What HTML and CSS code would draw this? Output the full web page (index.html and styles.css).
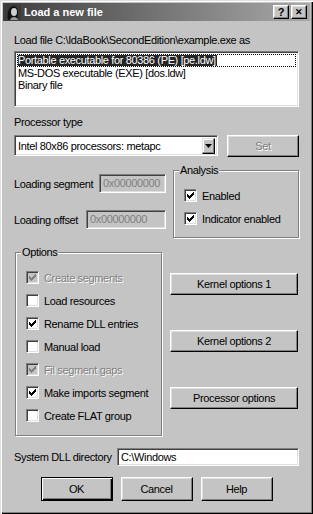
FILE: index.html
```html
<!DOCTYPE html>
<html lang="en">
<head>
  <meta charset="UTF-8" />
  <meta name="viewport" content="width=device-width, initial-scale=1.0"/>
  <title>Load a new file</title>
  <link rel="stylesheet" href="styles.css">
</head>
<body>
  <div class="window">
    <div class="titlebar">
      <svg class="app-icon" width="16" height="16" viewBox="0 0 16 16">
        <rect width="16" height="16" fill="#3a3a3a"/>
        <path d="M3 16 C2 10 3 3 8 2 C13 2 14 8 12 16 Z" fill="#111"/>
        <ellipse cx="9" cy="8" rx="3" ry="4" fill="#cfcfcf"/>
        <path d="M5 16 C6 12 12 12 13 16 Z" fill="#9a9a9a"/>
      </svg>
      <span class="title">Load a new file</span>
      <button class="tbtn">?</button>
      <button class="tbtn tbtn-close">&#x2715;</button>
    </div>

    <div class="content">
      <p class="label first">Load file C:\IdaBook\SecondEdition\example.exe as</p>
      <div class="listbox">
        <div class="item selected"><span>Portable executable for 80386 (PE) [pe.ldw]</span></div>
        <div class="item">MS-DOS executable (EXE) [dos.ldw]</div>
        <div class="item">Binary file</div>
      </div>

      <p class="label ptype">Processor type</p>
      <div class="combo-row">
        <div class="combo">
          <span class="combo-text">Intel 80x86 processors: metapc</span>
          <span class="combo-arrow">
            <svg width="7" height="4" viewBox="0 0 7 4"><path d="M0 0h7l-3.5 4z" fill="#000"/></svg>
          </span>
        </div>
        <button class="btn btn-set" disabled>Set</button>
      </div>

      <div class="mid">
        <div class="seg-col">
          <div class="field-row seg">
            <span>Loading segment</span>
            <span class="input disabled w-seg">0x00000000</span>
          </div>
          <div class="field-row off">
            <span>Loading offset</span>
            <span class="input disabled w-off">0x00000000</span>
          </div>
        </div>
        <fieldset class="group analysis">
          <legend>Analysis</legend>
          <label class="check"><span class="cb on"><svg width="11" height="11" viewBox="0 0 11 11"><path d="M2 4h1v3h-1zM3 5h1v3h-1zM4 6h1v3h-1zM5 5h1v3h-1zM6 4h1v3h-1zM7 3h1v3h-1zM8 2h1v3h-1z"/></svg></span>Enabled</label>
          <label class="check"><span class="cb on"><svg width="11" height="11" viewBox="0 0 11 11"><path d="M2 4h1v3h-1zM3 5h1v3h-1zM4 6h1v3h-1zM5 5h1v3h-1zM6 4h1v3h-1zM7 3h1v3h-1zM8 2h1v3h-1z"/></svg></span>Indicator enabled</label>
        </fieldset>
      </div>

      <div class="opts">
        <fieldset class="group options">
          <legend>Options</legend>
          <label class="check off"><span class="cb on grey"><svg width="11" height="11" viewBox="0 0 11 11"><path d="M2 4h1v3h-1zM3 5h1v3h-1zM4 6h1v3h-1zM5 5h1v3h-1zM6 4h1v3h-1zM7 3h1v3h-1zM8 2h1v3h-1z"/></svg></span>Create segments</label>
          <label class="check"><span class="cb"></span>Load resources</label>
          <label class="check"><span class="cb on"><svg width="11" height="11" viewBox="0 0 11 11"><path d="M2 4h1v3h-1zM3 5h1v3h-1zM4 6h1v3h-1zM5 5h1v3h-1zM6 4h1v3h-1zM7 3h1v3h-1zM8 2h1v3h-1z"/></svg></span>Rename DLL entries</label>
          <label class="check"><span class="cb"></span>Manual load</label>
          <label class="check off"><span class="cb on grey"><svg width="11" height="11" viewBox="0 0 11 11"><path d="M2 4h1v3h-1zM3 5h1v3h-1zM4 6h1v3h-1zM5 5h1v3h-1zM6 4h1v3h-1zM7 3h1v3h-1zM8 2h1v3h-1z"/></svg></span>Fil segment gaps</label>
          <label class="check"><span class="cb on"><svg width="11" height="11" viewBox="0 0 11 11"><path d="M2 4h1v3h-1zM3 5h1v3h-1zM4 6h1v3h-1zM5 5h1v3h-1zM6 4h1v3h-1zM7 3h1v3h-1zM8 2h1v3h-1z"/></svg></span>Make imports segment</label>
          <label class="check"><span class="cb"></span>Create FLAT group</label>
        </fieldset>
        <div class="side-btns">
          <button class="btn wide">Kernel options 1</button>
          <button class="btn wide">Kernel options 2</button>
          <button class="btn wide">Processor options</button>
        </div>
      </div>

      <div class="field-row dll">
        <span>System DLL directory</span>
        <span class="input w-dll">C:\Windows</span>
      </div>

      <div class="actions">
        <button class="btn btn-default">OK</button>
        <button class="btn">Cancel</button>
        <button class="btn">Help</button>
      </div>
    </div>
  </div>
</body>
</html>
```

FILE: styles.css
```css
* {
  box-sizing: border-box;
}
body {
  margin: 0;
  background: #c4c4c4;
  font: 11px "Liberation Sans", Arial, sans-serif;
  letter-spacing: -0.35px;
  color: #000;
}
.window {
  width: 313px;
  height: 514px;
  padding: 3px;
  background: #c4c4c4;
  box-shadow: inset 1px 1px #dfdfdf, inset 2px 2px #fff, inset -1px -1px #000, inset -2px -2px #808080;
}

/* title bar */
.titlebar {
  height: 18px;
  display: flex;
  align-items: center;
  padding: 0 3px 0 2px;
  background: linear-gradient(to right, #3e3e3e, #a9a9a9);
}
.app-icon {
  display: block;
  margin-right: 3px;
}
.title {
  flex: 1;
  color: #fff;
  font-weight: bold;
  font-size: 11px;
  letter-spacing: 0;
}
.tbtn {
  width: 16px;
  height: 14px;
  padding: 0;
  margin-left: 2px;
  font: bold 11px "Liberation Sans", Arial, sans-serif;
  line-height: 11px;
  background: #c4c4c4;
  border: 1px solid;
  border-color: #fff #000 #000 #fff;
  box-shadow: inset -1px -1px #808080, inset 1px 1px #dfdfdf;
}
.tbtn-close {
  font-size: 9px;
}

.content {
  padding: 0 11px;
}
.label {
  margin: 0;
  line-height: 13px;
}
.label.first {
  margin-top: 13px;
}
.label.ptype {
  margin-top: 9px;
}

/* sunken controls */
.listbox, .combo, .input {
  background: #fff;
  border: 1px solid;
  border-color: #808080 #fff #fff #808080;
  box-shadow: inset 1px 1px #404040, inset -1px -1px #dfdfdf;
}
.listbox {
  margin-top: 4px;
  height: 56px;
  padding: 2px;
}
.item {
  height: 12px;
  line-height: 12px;
  padding-left: 1px;
  white-space: nowrap;
}
.item.selected {
  border: 1px dotted #000;
  height: 13px;
  line-height: 11px;
  padding-left: 0;
}
.item.selected span {
  display: inline-block;
  background: #242424;
  color: #fff;
  padding-right: 1px;
}

.combo-row {
  margin-top: 6px;
  display: flex;
  align-items: center;
  justify-content: space-between;
  height: 21px;
}
.combo {
  width: 204px;
  height: 21px;
  display: flex;
  align-items: center;
  padding: 0 2px 0 3px;
}
.combo-text {
  flex: 1;
}
.combo-arrow {
  width: 13px;
  height: 16px;
  display: flex;
  align-items: center;
  justify-content: center;
  background: #c4c4c4;
  border: 1px solid;
  border-color: #dfdfdf #000 #000 #dfdfdf;
  box-shadow: inset -1px -1px #808080, inset 1px 1px #fff;
}
.combo-arrow svg {
  display: block;
}

/* buttons */
.btn {
  height: 22px;
  padding: 0;
  font: 11px "Liberation Sans", Arial, sans-serif;
  letter-spacing: -0.35px;
  color: #000;
  background: #c4c4c4;
  border: 1px solid;
  border-color: #fff #000 #000 #fff;
  box-shadow: inset -1px -1px #808080, inset 1px 1px #dfdfdf;
}
.btn:disabled {
  color: #808080;
  text-shadow: 1px 1px 0 #fff;
}
.btn-set {
  width: 72px;
}
.btn-default {
  border-color: #000;
  box-shadow: inset 1px 1px #fff, inset -1px -1px #000, inset -2px -2px #808080;
}

.mid {
  margin-top: 8px;
  display: flex;
  justify-content: space-between;
}
.seg-col {
  width: 152px;
}
.field-row {
  display: flex;
  align-items: center;
  justify-content: space-between;
  height: 19px;
}
.field-row.seg {
  margin-top: 10px;
}
.field-row.off {
  margin-top: 17px;
}
.input {
  height: 19px;
  line-height: 15px;
  padding: 1px 3px;
}
.input.disabled {
  background: #c4c4c4;
  color: #808080;
}
.w-seg {
  width: 67px;
}
.w-off {
  width: 80px;
}

/* group boxes */
.group {
  margin: 0;
  border: 1px solid #808080;
  box-shadow: 1px 1px 0 #fff, inset 1px 1px 0 #fff;
  padding: 7px 0 0 10px;
  min-width: 0;
}
.group legend {
  padding: 0 1px;
  margin-left: -5px;
  line-height: 13px;
  background: #c4c4c4;
}
.analysis {
  width: 126px;
  height: 74px;
}
.options {
  width: 147px;
  height: 190px;
  margin-left: 1px;
}
.check {
  display: flex;
  align-items: center;
  height: 23px;
  white-space: nowrap;
}
.check.off {
  color: #808080;
  text-shadow: 1px 1px 0 #fff;
}
.cb {
  width: 13px;
  height: 13px;
  margin-right: 5px;
  background: #fff;
  border: 1px solid;
  border-color: #808080 #fff #fff #808080;
  box-shadow: inset 1px 1px #404040, inset -1px -1px #dfdfdf;
  flex: none;
}
.cb svg {
  display: block;
  fill: #000;
  shape-rendering: crispEdges;
}
.cb.grey {
  background: #c4c4c4;
}
.cb.grey svg {
  fill: #808080;
}

.opts {
  margin-top: 8px;
  display: flex;
}
.side-btns {
  margin-left: 8px;
  padding-top: 27px;
  display: flex;
  flex-direction: column;
  gap: 35px;
}
.btn.wide {
  width: 128px;
}

.field-row.dll {
  margin-top: 12px;
  height: 18px;
}
.w-dll {
  width: 182px;
  height: 18px;
}

.actions {
  margin-top: 11px;
  display: flex;
  justify-content: center;
  gap: 8px;
}
.actions .btn {
  width: 72px;
  height: 24px;
}
```
